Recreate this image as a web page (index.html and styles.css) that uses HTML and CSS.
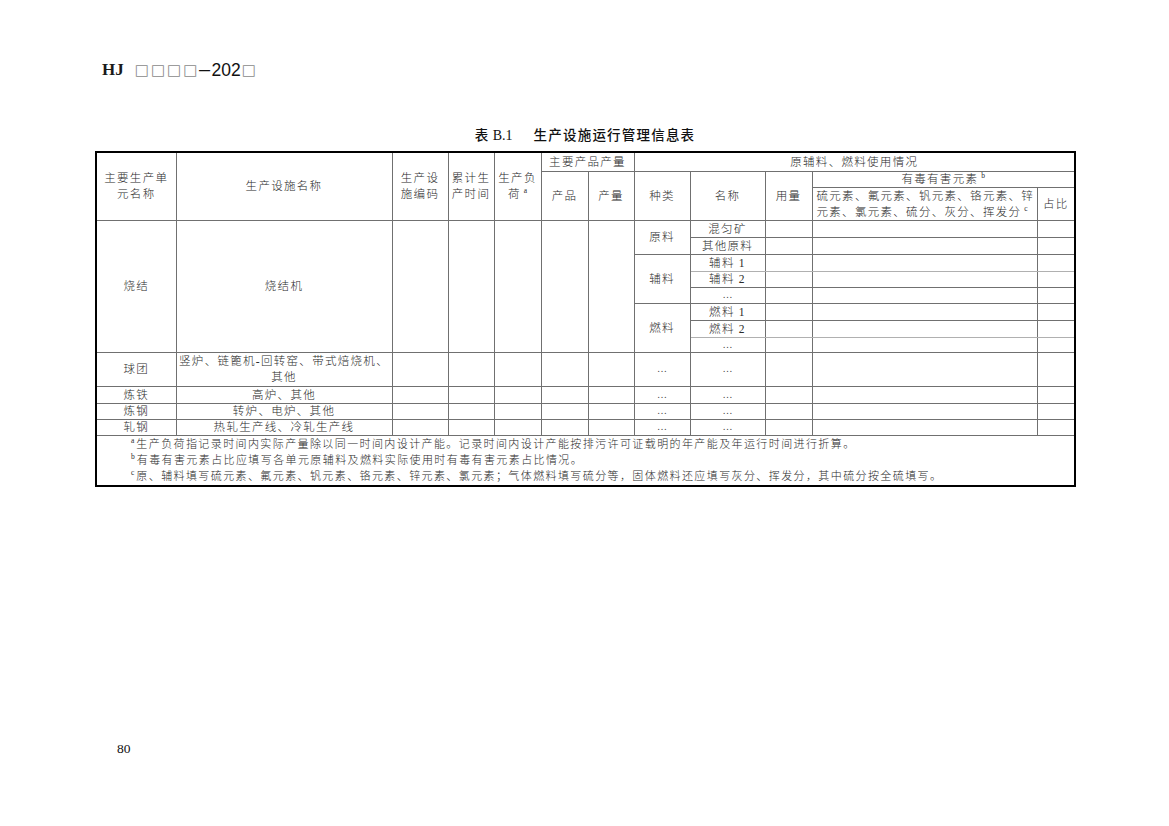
FILE: index.html
```html
<!DOCTYPE html>
<html lang="zh">
<head>
<meta charset="utf-8">
<title>表 B.1 生产设施运行管理信息表</title>
<link rel="stylesheet" href="styles.css">
</head>
<body>
<div class="page">
  <header class="doc-head"><span class="hj">HJ</span><span class="boxes">□□□□</span><span class="dash">—</span><span class="year">202</span><span class="boxes">□</span></header>
  <h1 class="title"><span class="cj">表</span> <span class="lat">B.1</span><span class="gap"></span><span class="cj">生产设施运行管理信息表</span></h1>
  <table class="info">
    <colgroup>
      <col class="c1"><col class="c2"><col class="c3"><col class="c4"><col class="c5"><col class="c6">
      <col class="c7"><col class="c8"><col class="c9"><col class="c10"><col class="c11"><col class="c12">
    </colgroup>
    <thead>
      <tr class="h19">
        <th rowspan="3" class="two">主要生产单<br>元名称</th>
        <th rowspan="3">生产设施名称</th>
        <th rowspan="3" class="two">生产设<br>施编码</th>
        <th rowspan="3" class="two">累计生<br>产时间</th>
        <th rowspan="3" class="two">生产负<br>荷<sup>a</sup></th>
        <th colspan="2">主要产品产量</th>
        <th colspan="5">原辅料、燃料使用情况</th>
      </tr>
      <tr class="h16">
        <th rowspan="2">产品</th>
        <th rowspan="2">产量</th>
        <th rowspan="2">种类</th>
        <th rowspan="2">名称</th>
        <th rowspan="2">用量</th>
        <th colspan="2">有毒有害元素<sup>b</sup></th>
      </tr>
      <tr class="h33">
        <th class="left two">硫元素、氟元素、钒元素、铬元素、锌<br>元素、氯元素、硫分、灰分、挥发分<sup>c</sup></th>
        <th>占比</th>
      </tr>
    </thead>
    <tbody>
      <tr class="h17">
        <td rowspan="8">烧结</td>
        <td rowspan="8">烧结机</td>
        <td rowspan="8"></td><td rowspan="8"></td><td rowspan="8"></td><td rowspan="8"></td><td rowspan="8"></td>
        <td rowspan="2">原料</td>
        <td>混匀矿</td><td></td><td></td><td></td>
      </tr>
      <tr class="h17"><td>其他原料</td><td></td><td></td><td></td></tr>
      <tr class="h17">
        <td rowspan="3">辅料</td>
        <td class="lt">辅料 1</td><td class="lt"></td><td class="lt"></td><td class="lt"></td>
      </tr>
      <tr class="h16"><td>辅料 2</td><td></td><td></td><td></td></tr>
      <tr class="h16"><td class="dots">…</td><td></td><td></td><td></td></tr>
      <tr class="h17">
        <td rowspan="3">燃料</td>
        <td>燃料 1</td><td></td><td></td><td></td>
      </tr>
      <tr class="h17"><td class="lt">燃料 2</td><td class="lt"></td><td class="lt"></td><td class="lt"></td></tr>
      <tr class="h15"><td class="dots">…</td><td></td><td></td><td></td></tr>
      <tr class="h34">
        <td>球团</td>
        <td class="two">竖炉、链篦机-回转窑、带式焙烧机、<br>其他</td>
        <td></td><td></td><td></td><td></td><td></td>
        <td class="dots">…</td><td class="dots">…</td><td></td><td></td><td></td>
      </tr>
      <tr class="h17">
        <td>炼铁</td><td>高炉、其他</td>
        <td></td><td></td><td></td><td></td><td></td>
        <td class="dots">…</td><td class="dots">…</td><td></td><td></td><td></td>
      </tr>
      <tr class="h16">
        <td>炼钢</td><td>转炉、电炉、其他</td>
        <td></td><td></td><td></td><td></td><td></td>
        <td class="dots">…</td><td class="dots">…</td><td></td><td></td><td></td>
      </tr>
      <tr class="h16">
        <td>轧钢</td><td>热轧生产线、冷轧生产线</td>
        <td></td><td></td><td></td><td></td><td></td>
        <td class="dots">…</td><td class="dots">…</td><td></td><td></td><td></td>
      </tr>
      <tr class="notes">
        <td colspan="12">
          <p><sup>a</sup>生产负荷指记录时间内实际产量除以同一时间内设计产能。记录时间内设计产能按排污许可证载明的年产能及年运行时间进行折算。</p>
          <p><sup>b</sup>有毒有害元素占比应填写各单元原辅料及燃料实际使用时有毒有害元素占比情况。</p>
          <p><sup>c</sup>原、辅料填写硫元素、氟元素、钒元素、铬元素、锌元素、氯元素；气体燃料填写硫分等，固体燃料还应填写灰分、挥发分，其中硫分按全硫填写。</p>
        </td>
      </tr>
    </tbody>
  </table>
  <footer class="page-no">80</footer>
</div>
</body>
</html>
```
FILE: styles.css
```css
html, body {
  margin: 0;
  padding: 0;
  background: #fff;
}
.page {
  width: 1169px;
  height: 826px;
  box-sizing: border-box;
  padding: 60px 0 0 95px;
  color: #1a1a1a;
  font-family: "Liberation Serif", "Noto Sans CJK SC", serif;
}
.doc-head {
  display: flex;
  align-items: center;
  height: 20px;
  margin-left: 7px;
  font-size: 17px;
}
.doc-head .hj {
  font-family: "Liberation Serif", serif;
  font-weight: bold;
  margin-right: 11px;
}
.doc-head .boxes {
  font-family: "DejaVu Sans", sans-serif;
  color: #8a8a8a;
  font-size: 15px;
  letter-spacing: 2px;
}
.doc-head .dash {
  display: inline-block;
  font-family: "Liberation Sans", sans-serif;
  font-size: 17px;
  color: #111;
  transform: scaleX(0.65);
  margin: 0 -2px 0 -3px;
}
.doc-head .year {
  font-family: "Liberation Sans", sans-serif;
  font-size: 17.5px;
  color: #111;
  margin-right: 1px;
}
.title {
  margin: 45px 0 0 0;
  width: 980px;
  height: 26px;
  text-align: center;
  font-weight: normal;
  font-size: 13.5px;
  line-height: 18px;
  color: #111;
}
.title .cj {
  font-family: "Noto Sans CJK SC", sans-serif;
  font-weight: 500;
  letter-spacing: 1.2px;
}
.title .lat {
  font-family: "Liberation Serif", serif;
  font-size: 14px;
}
.title .gap {
  display: inline-block;
  width: 21px;
}
.info {
  border-collapse: collapse;
  table-layout: fixed;
  width: 981px;
  border: 2px solid #000;
  font-family: "Liberation Serif", "Noto Sans CJK SC", serif;
  font-size: 11.5px;
  font-weight: 300;
  letter-spacing: 1.3px;
  color: #2a2a2a;
}
.info col.c1 { width: 80px; }
.info col.c2 { width: 216px; }
.info col.c3 { width: 56px; }
.info col.c4 { width: 46px; }
.info col.c5 { width: 47px; }
.info col.c6 { width: 47px; }
.info col.c7 { width: 46px; }
.info col.c8 { width: 56px; }
.info col.c9 { width: 75px; }
.info col.c10 { width: 47px; }
.info col.c11 { width: 225px; }
.info col.c12 { width: 38px; }
.info th, .info td {
  border: 1px solid #707070;
  padding: 0 1px;
  text-align: center;
  vertical-align: middle;
  font-weight: 300;
  line-height: 14px;
  white-space: nowrap;
  overflow: hidden;
}
.info th.two, .info td.two {
  line-height: 16px;
}
.info th.left {
  text-align: left;
  padding-left: 4px;
}
.info td.lt {
  border-bottom-color: #b0b0b0;
}
.info td.dots {
  letter-spacing: 0;
  font-size: 10px;
  color: #444;
}
.info sup {
  font-family: "Liberation Serif", serif;
  font-size: 7.5px;
  line-height: 0;
  vertical-align: 5px;
  letter-spacing: 0;
  margin-left: 3px;
}
.h15 { height: 15px; }
.h16 { height: 16px; }
.h17 { height: 17px; }
.h19 { height: 19px; }
.h33 { height: 33px; }
.h34 { height: 34px; }
.info tr.notes td {
  height: 49px;
  text-align: left;
  padding: 0 0 0 40px;
  font-size: 11px;
  letter-spacing: 1.4px;
  vertical-align: middle;
}
.info tr.notes p {
  margin: 0;
  line-height: 16px;
}
.info tr.notes sup {
  margin-left: -6px;
  margin-right: 2px;
}
.page-no {
  margin: 254px 0 0 22px;
  font-family: "Liberation Serif", serif;
  font-size: 13.5px;
  color: #111;
}
```
